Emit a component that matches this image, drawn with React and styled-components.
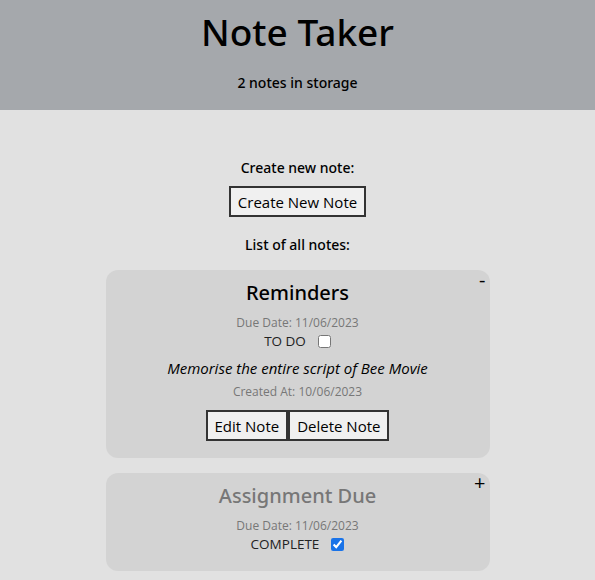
import React from 'react';
import styled, { createGlobalStyle } from 'styled-components';

const GlobalStyle = createGlobalStyle`
  body {
    margin: 0;
    background: #e1e1e1;
    font-family: "Open Sans", "Noto Sans", sans-serif;
    color: #000;
  }
`;

const notes = [
    {
        title: 'Reminders',
        due: '11/06/2023',
        done: false,
        open: true,
        body: 'Memorise the entire script of Bee Movie',
        created: '10/06/2023',
    },
    {
        title: 'Assignment Due',
        due: '11/06/2023',
        done: true,
        open: false,
    },
];

const Header = styled.header`
    background: #a5a8ac;
    height: 110px;
    display: flex;
    flex-direction: column;
    align-items: center;
    padding-top: 9px;
    box-sizing: border-box;
`

const Title = styled.h1`
    margin: 0;
    font-family: "Noto Sans", "Open Sans", sans-serif;
    font-size: 37px;
    font-weight: 500;
    line-height: 46px;
`

const Count = styled.p`
    margin: 18px 0 0;
    font-family: "Noto Sans", "Open Sans", sans-serif;
    font-size: 14px;
    font-weight: 500;
`

const Main = styled.main`
    display: flex;
    flex-direction: column;
    align-items: center;
    padding-top: 48px;
`

const Label = styled.p`
    margin: 0;
    font-family: "Noto Sans", "Open Sans", sans-serif;
    font-size: 14px;
    font-weight: 500;
    line-height: 20px;
`

const Button = styled.button`
    font-family: inherit;
    font-size: 15px;
    background: #f0f0f0;
    border: 2px solid #333;
    padding: 2px 7px;
    height: 31px;
    color: #000;
`

const CreateButton = styled(Button)`
    margin: 8px 0 18px;
`

const Card = styled.section`
    position: relative;
    width: 384px;
    background: #d3d3d3;
    border-radius: 12px;
    margin-top: 15px;
    padding: 9px 0 17px;
    display: flex;
    flex-direction: column;
    align-items: center;
    box-sizing: border-box;
`

const Toggle = styled.span`
    position: absolute;
    top: -2px;
    right: 4px;
    font-size: 20px;
    line-height: 24px;
`

const CardTitle = styled.h2`
    margin: 0;
    font-family: "Noto Sans", "Open Sans", sans-serif;
    font-size: 20px;
    font-weight: 500;
    line-height: 28px;
    color: ${p => p.faded ? '#777' : '#000'};
`

const Meta = styled.p`
    margin: ${p => p.top || '0'} 0 0;
    font-size: 12px;
    color: #777;
    line-height: 16px;
`

const Status = styled.label`
    display: flex;
    align-items: center;
    gap: 12px;
    font-size: 13.5px;
    color: #222;
    line-height: 20px;
    input {
        margin: 0;
        width: 13px;
        height: 13px;
        accent-color: #1a73e8;
    }
`

const Body = styled.p`
    margin: 7px 0 0;
    font-style: italic;
    font-size: 15px;
    line-height: 20px;
`

const Actions = styled.div`
    display: flex;
    margin-top: 10px;
`

const NoteCard = ({ note }) => (
    <Card>
        <Toggle>{note.open ? '-' : '+'}</Toggle>
        <CardTitle faded={note.done}>{note.title}</CardTitle>
        <Meta top="8px">Due Date: {note.due}</Meta>
        <Status>
            {note.done ? 'COMPLETE' : 'TO DO'}
            <input type="checkbox" defaultChecked={note.done} />
        </Status>
        {note.open && (
            <>
                <Body>{note.body}</Body>
                <Meta top="6px">Created At: {note.created}</Meta>
                <Actions>
                    <Button>Edit Note</Button>
                    <Button>Delete Note</Button>
                </Actions>
            </>
        )}
    </Card>
);

export default function App() {
    return (
        <>
            <GlobalStyle />
            <Header>
                <Title>Note Taker</Title>
                <Count>{notes.length} notes in storage</Count>
            </Header>
            <Main>
                <Label>Create new note:</Label>
                <CreateButton>Create New Note</CreateButton>
                <Label>List of all notes:</Label>
                {notes.map(n => <NoteCard key={n.title} note={n} />)}
            </Main>
        </>
    );
}
